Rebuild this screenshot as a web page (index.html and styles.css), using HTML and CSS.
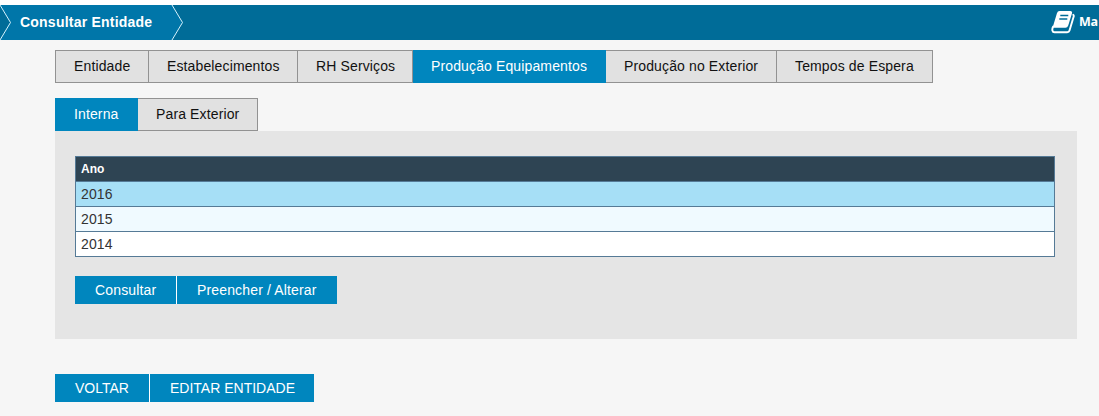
FILE: index.html
```
<!DOCTYPE html>
<html lang="pt">
<head>
<meta charset="utf-8">
<title>Consultar Entidade</title>
<link rel="stylesheet" href="styles.css">
</head>
<body>
<header class="topbar">
  <svg class="crumb-shape" width="185" height="35" viewBox="0 0 185 35" aria-hidden="true">
    <path d="M0 0H172L182.500 17.500 172 35H0L10.500 17.500Z" fill="#0076a9"/>
    <path d="M0 0L10.500 17.500 0 35M172 0L182.500 17.500 172 35" fill="none" stroke="#d5f2fc" stroke-width="1"/>
  </svg>
  <h1 class="crumb"><span>Consultar Entidade</span></h1>
  <a class="manual">
    <svg width="24" height="24" viewBox="0 0 24 24" aria-hidden="true">
      <path d="M8.500 2H19.300Q20.500 2 20.100 3.300L16.300 15.500Q15.800 16.800 14.500 16.800H2.800L6.800 3.500Q7.300 2 8.500 2Z" fill="#fff" stroke="#fff" stroke-width="1.800" stroke-linejoin="round"/>
      <path d="M9.300 5.500H17.300M8.300 8.900H16.300" stroke="#006c98" stroke-width="1.500"/>
      <path d="M2.200 16.500C.6 19.500 1.200 22.300 3.500 22.300H16.200Q18 22.300 18.500 20.600L22.700 6.500Q23 5.500 22.300 4.800" fill="none" stroke="#fff" stroke-width="1.900" stroke-linejoin="round" stroke-linecap="round"/>
    </svg>
    <span>Ma</span>
  </a>
</header>
<main class="content">
  <nav class="tabs">
    <a class="tab w-entity"><span>Entidade</span></a>
    <a class="tab w-places"><span>Estabelecimentos</span></a>
    <a class="tab w-staff"><span>RH Serviços</span></a>
    <a class="tab w-equipment active"><span>Produção Equipamentos</span></a>
    <a class="tab w-abroad"><span>Produção no Exterior</span></a>
    <a class="tab w-waiting"><span>Tempos de Espera</span></a>
  </nav>
  <nav class="tabs subtabs">
    <a class="tab w-internal active"><span>Interna</span></a>
    <a class="tab w-external"><span>Para Exterior</span></a>
  </nav>
  <section class="panel">
    <table class="years">
      <thead><tr><th>Ano</th></tr></thead>
      <tbody>
        <tr class="selected"><td>2016</td></tr>
        <tr class="odd"><td>2015</td></tr>
        <tr><td>2014</td></tr>
      </tbody>
    </table>
    <div class="buttons actions">
      <button class="w-consult"><span>Consultar</span></button>
      <button class="w-fill"><span>Preencher / Alterar</span></button>
    </div>
  </section>
  <div class="buttons">
    <button class="w-back"><span>VOLTAR</span></button>
    <button class="w-edit"><span>EDITAR ENTIDADE</span></button>
  </div>
</main>
</body>
</html>
```
FILE: styles.css
```
* { box-sizing: border-box; }
body {
  margin: 0;
  padding-top: 5px;
  height: 416px;
  overflow: hidden;
  background: linear-gradient(#fff 5px, #f6f6f6 5px);
  font: 14px/16px "Liberation Sans", Arial, sans-serif;
  color: #111;
}
.topbar {
  position: relative;
  display: flex;
  justify-content: space-between;
  align-items: center;
  height: 35px;
  background: #006c98;
  color: #fff;
}
.crumb-shape { position: absolute; left: 0; top: 0; }
.crumb {
  position: relative;
  margin: 0;
  padding: 0 0 2px 20px;
  font-size: 14px;
  line-height: 16px;
  letter-spacing: .22px;
}
.manual {
  display: flex;
  flex: none;
  align-items: center;
  gap: 4px;
  width: 48px;
  padding-bottom: 1px;
  font: bold 12.500px/18px "Open Sans", sans-serif;
}
.manual svg { flex: none; }
.manual span { padding-bottom: 1px; letter-spacing: -.2px; }
.content { padding: 10px 22px 0 55px; }
.tabs { display: flex; height: 33px; }
.subtabs { margin-top: 15px; }
.tab {
  padding: 7px 0 0 18px;
  border: 1px solid #929292;
  border-left-width: 0;
  background: #e1e1e1;
  white-space: nowrap;
  letter-spacing: .13px;
}
.tab:first-child { border-left-width: 1px; }
.tab.active { background: #0086be; border-color: #0086be; color: #fff; }
.w-entity { width: 94px; }
.w-places { width: 149px; }
.w-staff { width: 115px; }
.w-equipment { width: 193px; }
.w-abroad { width: 171px; }
.w-waiting { width: 156px; }
.w-internal { width: 83px; }
.w-external { width: 120px; }
.panel {
  height: 208px;
  margin-bottom: 35px;
  padding: 25px 22px 0 20px;
  background: #e5e5e5;
}
.years {
  width: 100%;
  margin-bottom: 19px;
  border-collapse: collapse;
  background: #fff;
  color: #333;
  letter-spacing: .15px;
}
.years th, .years td {
  height: 25px;
  padding: 0 5px;
  border: 1px solid #557a96;
  text-align: left;
}
.years th {
  background: #2e4453;
  color: #fff;
  font-size: 12px;
  letter-spacing: 0;
}
.years .selected { background: #a6dff6; }
.years .odd { background: #f0faff; }
.buttons { display: flex; gap: 1px; }
.buttons button {
  height: 28px;
  padding: 0 0 0 20px;
  border: 0;
  background: #0086be;
  box-shadow: 1px 0 #fff;
  color: #fff;
  font: inherit;
  text-align: left;
  white-space: nowrap;
}
.buttons button:last-child { box-shadow: none; }
.actions button { letter-spacing: .15px; }
.w-consult { width: 101px; }
.w-fill { width: 160px; }
.w-back { width: 94px; }
.w-edit { width: 164px; }
```
